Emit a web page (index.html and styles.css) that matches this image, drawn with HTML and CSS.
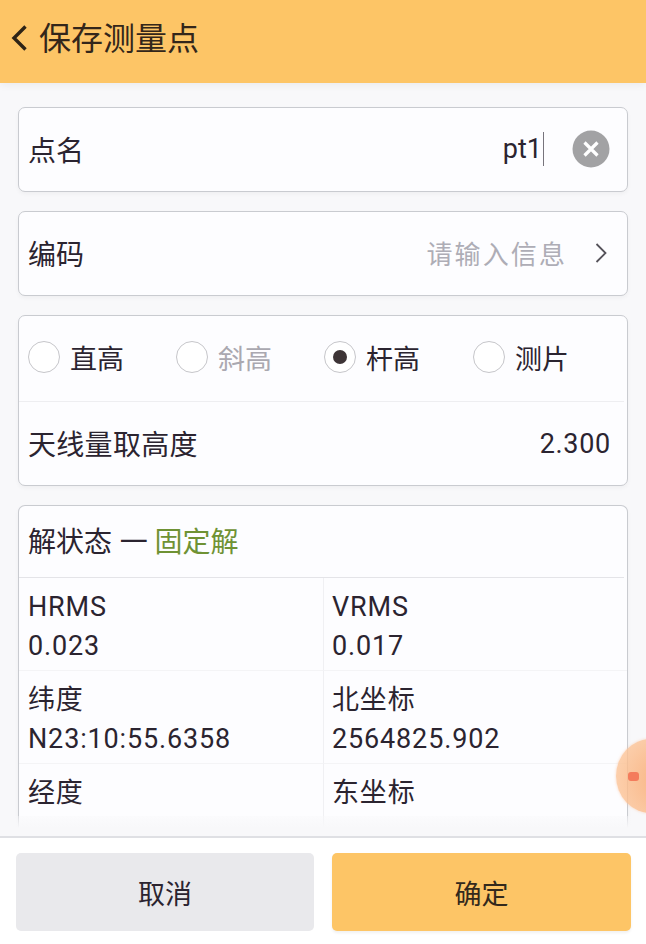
FILE: index.html
```html
<!DOCTYPE html>
<html lang="zh-CN">
<head>
  <meta charset="UTF-8">
  <title>保存测量点</title>
  <link rel="stylesheet" href="styles.css">
</head>
<body>
  <div class="header">
    <svg class="back" width="18" height="28" viewBox="0 0 18 28"><path d="M15.500 2.500 L4 14 L15.500 25.500" fill="none" stroke="#2e2416" stroke-width="3.400"/></svg>
    <div class="title">保存测量点</div>
  </div>

  <div class="content">
    <div class="card row">
      <div>点名</div>
      <div class="value-wrap">
        <span class="latin">pt1</span><span class="caret"></span>
        <svg class="clear" width="38" height="38" viewBox="0 0 38 38">
          <circle cx="19" cy="19" r="18.5" fill="#a2a2a4"/>
          <path d="M12.5 12.5 L25.5 25.5 M25.5 12.5 L12.5 25.5" stroke="#fff" stroke-width="3.2"/>
        </svg>
      </div>
    </div>

    <div class="card row">
      <div>编码</div>
      <div class="value-wrap">
        <span class="placeholder">请输入信息</span>
        <svg class="chevron" width="14" height="22" viewBox="0 0 14 22"><path d="M2.500 2 L11.500 11 L2.500 20" fill="none" stroke="#55525a" stroke-width="1.800"/></svg>
      </div>
    </div>

    <div class="card">
      <div class="radios">
        <div class="radio"><span class="dot"></span>直高</div>
        <div class="radio disabled"><span class="dot"></span>斜高</div>
        <div class="radio checked"><span class="dot"></span>杆高</div>
        <div class="radio"><span class="dot"></span>测片</div>
      </div>
      <div class="antenna">
        <div class="antenna-label">天线量取高度</div>
        <div class="latin height">2.300</div>
      </div>
    </div>

    <div class="card status">
      <div class="status-title">解状态 一 <span class="fixed">固定解</span></div>
      <div class="grid">
        <div class="cell"><div>HRMS</div><div>0.023</div></div>
        <div class="cell"><div>VRMS</div><div>0.017</div></div>
        <div class="cell"><div>纬度</div><div>N23:10:55.6358</div></div>
        <div class="cell"><div>北坐标</div><div>2564825.902</div></div>
        <div class="cell"><div>经度</div></div>
        <div class="cell"><div>东坐标</div></div>
      </div>
    </div>

    <div class="fade"></div>
    <div class="finger"><span></span></div>
  </div>

  <div class="footer">
    <div class="btn cancel">取消</div>
    <div class="btn ok">确定</div>
  </div>
</body>
</html>
```

FILE: styles.css
```css
html, body {
  margin: 0;
  height: 100%;
}

body {
  width: 646px;
  height: 944px;
  display: flex;
  flex-direction: column;
  overflow: hidden;
  background: #f8f8fa;
  color: #2b2430;
  font-family: "Liberation Sans", "Noto Sans CJK SC", sans-serif;
  font-size: 28px;
}

.header {
  height: 83px;
  flex-shrink: 0;
  display: flex;
  align-items: center;
  gap: 11px;
  padding-left: 10px;
  box-sizing: border-box;
  background: #fdc566;
  box-shadow: 0 2px 8px rgba(0, 0, 0, 0.06);
  position: relative;
  color: #33261a;
}

.back {
  margin-top: -8px;
}

.title {
  font-size: 32px;
  margin-top: -11px;
}

.content {
  flex: 1;
  position: relative;
  overflow: hidden;
  padding: 24px 18px 0;
  display: flex;
  flex-direction: column;
  gap: 19px;
}

.card {
  background: #fdfdff;
  border: 1px solid #c9cbd0;
  border-radius: 7px;
  box-shadow: 0 2px 4px rgba(0, 0, 0, 0.04);
  flex-shrink: 0;
}

.row {
  height: 81px;
  display: flex;
  justify-content: space-between;
  align-items: center;
  padding: 0 17px 2px 9px;
}

.value-wrap {
  display: flex;
  align-items: center;
}

.latin {
  font-family: "Roboto", "Liberation Sans", sans-serif;
  font-size: 27px;
}

.height {
  letter-spacing: 0.7px;
  margin-top: 3px;
}

.caret {
  width: 1px;
  height: 34px;
  background: #77747c;
  margin: 0 0 0 1px;
}

.clear {
  margin-left: 28px;
}

.placeholder {
  color: #aeadb6;
  font-size: 26px;
  letter-spacing: 2.100px;
}

.chevron {
  margin-left: 27px;
  margin-right: 2px;
}

.radios {
  height: 82px;
  display: grid;
  grid-template-columns: 148px 148px 149px 1fr;
  align-items: center;
  padding: 0 0 3px 9px;
  margin-right: 3px;
  border-bottom: 1px solid #eeeef1;
}

.radio {
  display: flex;
  align-items: center;
  gap: 10px;
  font-size: 27px;
}

.radio.disabled {
  color: #aaa8b0;
}

.dot {
  width: 30px;
  height: 30px;
  border: 1px solid #c6c6ca;
  border-radius: 50%;
  background: #fff;
  position: relative;
}

.radio.checked .dot::after {
  content: "";
  position: absolute;
  left: 8px;
  top: 8px;
  width: 14px;
  height: 14px;
  border-radius: 50%;
  background: #3d3436;
}

.antenna {
  height: 81px;
  display: flex;
  justify-content: space-between;
  align-items: center;
  padding: 0 16px 2px 9px;
}

.antenna-label {
  letter-spacing: 0.3px;
}

.status {
  height: 330px;
  border-bottom: none;
  border-radius: 7px 7px 0 0;
}

.status-title {
  height: 67px;
  display: flex;
  align-items: center;
  white-space: pre;
  padding: 0 0 4px 9px;
  margin-right: 3px;
  border-bottom: 1px solid #e4e4e8;
}

.fixed {
  color: #6f9234;
  margin-left: -1px;
}

.grid {
  display: grid;
  grid-template-columns: 304px 1fr;
  grid-auto-rows: 93px;
}

.cell {
  padding: 10px 0 0 9px;
  line-height: 39px;
  font-size: 27px;
  letter-spacing: 0.85px;
  border-bottom: 1px solid #f4f4f6;
  font-family: "Roboto", "Liberation Sans", "Noto Sans CJK SC", sans-serif;
}

.cell:nth-child(even) {
  border-left: 1px solid #f0f0f3;
  padding-left: 8px;
}

.fade {
  position: absolute;
  left: 0;
  right: 0;
  bottom: 0;
  height: 20px;
  background: linear-gradient(rgba(248, 248, 250, 0.4), #f8f8fa 60%);
}

.finger {
  position: absolute;
  right: -40px;
  top: 656px;
  width: 70px;
  height: 74px;
  border-radius: 50%;
  background: radial-gradient(circle at 70% 55%, rgba(249, 165, 105, 0.85), rgba(252, 195, 150, 0.8) 75%);
  box-shadow: 0 0 3px rgba(251, 190, 150, 0.6);
}

.finger span {
  position: absolute;
  left: 12px;
  top: 33px;
  width: 11px;
  height: 9px;
  border-radius: 3px;
  background: #f47c5c;
}

.footer {
  height: 108px;
  flex-shrink: 0;
  box-sizing: border-box;
  background: #fff;
  border-top: 2px solid #dfe0e4;
  display: grid;
  grid-template-columns: 298px 299px;
  gap: 18px;
  padding: 15px 0 0 16px;
}

.btn {
  height: 78px;
  border-radius: 5px;
  display: flex;
  align-items: center;
  justify-content: center;
  font-size: 27px;
}

.cancel {
  background: #e9e9ec;
}

.ok {
  background: #fdc566;
  color: #33291c;
  box-shadow: 0 2px 3px rgba(0, 0, 0, 0.06);
}
```
